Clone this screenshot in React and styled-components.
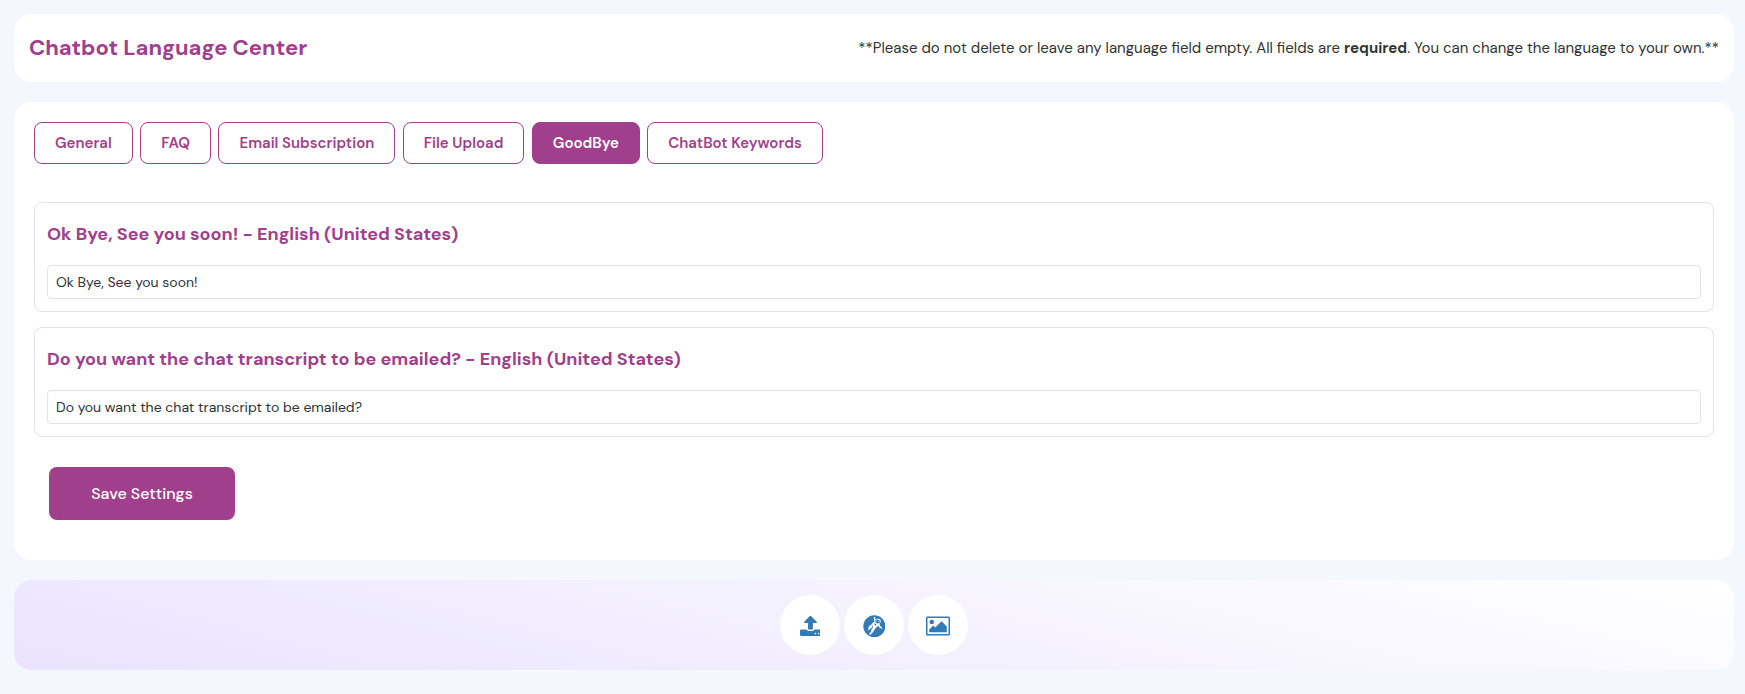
import React, { useState } from 'react';
import styled, { createGlobalStyle } from 'styled-components';
import { FaGrav } from 'react-icons/fa';

const tabs = ['General', 'FAQ', 'Email Subscription', 'File Upload', 'GoodBye', 'ChatBot Keywords'];

const fields = ['Ok Bye, See you soon!', 'Do you want the chat transcript to be emailed?'];

const UploadIcon = () => (
  <svg width="20.9" height="22.5" viewBox="0 0 1664 1792" fill="currentColor">
    <path d="M1280 1472q0-26-19-45t-45-19-45 19-19 45 19 45 45 19 45-19 19-45zm256 0q0-26-19-45t-45-19-45 19-19 45 19 45 45 19 45-19 19-45zm128-224v320q0 40-28 68t-68 28h-1472q-40 0-68-28t-28-68v-320q0-40 28-68t68-28h427q21 56 70.5 92t110.5 36h256q61 0 110.5-36t70.5-92h427q40 0 68 28t28 68zm-325-648q-17 40-59 40h-256v448q0 26-19 45t-45 19h-256q-26 0-45-19t-19-45v-448h-256q-42 0-59-40-17-39 14-69l448-448q18-19 45-19t45 19l448 448q31 30 14 69z" />
  </svg>
);

const PictureIcon = () => (
  <svg width="24" height="22" viewBox="0 0 24 22" fill="currentColor">
    <rect x="0.75" y="2.25" width="22.5" height="17.5" rx="0.6" fill="none" stroke="currentColor" strokeWidth="1.5" />
    <circle cx="5.8" cy="7" r="2.3" />
    <path d="M3.2 17.2v-2.6l4-4 2 2 6.4-6.4 5.2 5.2v5.8z" />
  </svg>
);

export default () => {
  const [active, setActive] = useState('GoodBye');

  return (
    <>
      <GlobalStyle />
      <Page>
        <Header>
          <Title>Chatbot Language Center</Title>
          <Notice>
            **Please do not delete or leave any language field empty. All fields are{' '}
            <b>required</b>. You can change the language to your own.**
          </Notice>
        </Header>

        <Panel>
          <TabList>
            {tabs.map((tab) => (
              <Tab key={tab} type="button" $active={active === tab} onClick={() => setActive(tab)}>
                {tab}
              </Tab>
            ))}
          </TabList>
          <FieldList>
            {fields.map((text) => (
              <Field key={text}>
                <FieldTitle>{text} - English (United States)</FieldTitle>
                <FieldInput type="text" defaultValue={text} />
              </Field>
            ))}
          </FieldList>
          <SaveButton type="button">Save Settings</SaveButton>
        </Panel>

        <Footer>
          <RoundButton type="button" aria-label="Upload">
            <UploadIcon />
          </RoundButton>
          <RoundButton type="button" aria-label="Grav">
            <FaGrav size={22.7} />
          </RoundButton>
          <RoundButton type="button" aria-label="Picture">
            <PictureIcon />
          </RoundButton>
        </Footer>
      </Page>
    </>
  );
};

const GlobalStyle = createGlobalStyle`
  * {
    box-sizing: border-box;
  }
  body {
    margin: 0;
    background: #f4f7fe;
    color: #333;
    font-family: 'DM Sans', Inter, sans-serif;
    font-optical-sizing: none;
  }
  button,
  input {
    font-family: inherit;
  }
`;

const Page = styled.div`
  display: flex;
  flex-direction: column;
  gap: 20px;
  min-height: 694px;
  padding: 14px 11px 24px 14px;
`;

const Header = styled.header`
  display: flex;
  align-items: center;
  justify-content: space-between;
  height: 68px;
  padding: 0 15px;
  border-radius: 18px;
  background: #fff;
`;

const Title = styled.h1`
  margin: 0 0 2px;
  color: #a03f8c;
  font-size: 22px;
  font-weight: 700;
`;

const Notice = styled.p`
  margin: 0;
  font-size: 15px;
  white-space: nowrap;

  b {
    font-weight: 700;
  }
`;

const Panel = styled.main`
  height: 458px;
  padding: 20px;
  border-radius: 18px;
  background: #fff;
`;

const TabList = styled.div`
  display: flex;
  gap: 7.5px;
`;

const Tab = styled.button`
  height: 42px;
  padding: 0 20px;
  border: 1px solid #a03f8c;
  border-radius: 8px;
  background: ${(props) => (props.$active ? '#a03f8c' : '#fff')};
  color: ${(props) => (props.$active ? '#fff' : '#a03f8c')};
  font-size: 15px;
  font-weight: 600;
  white-space: nowrap;
  cursor: pointer;
`;

const FieldList = styled.div`
  display: flex;
  flex-direction: column;
  gap: 15px;
  margin-top: 38px;
`;

const Field = styled.div`
  height: 110px;
  padding: 19px 12px 12px;
  border: 1px solid #e2e3ec;
  border-radius: 8px;
`;

const FieldTitle = styled.h2`
  margin: 0 0 19px;
  color: #a03f8c;
  font-size: 18px;
  font-weight: 700;
  line-height: 24px;
`;

const FieldInput = styled.input`
  display: block;
  width: 100%;
  height: 34px;
  padding: 0 8px;
  border: 1px solid #e2e3ec;
  border-radius: 4px;
  outline: 0;
  background: #fff;
  color: #2c3338;
  font-size: 14px;
`;

const SaveButton = styled.button`
  display: block;
  width: 186px;
  height: 53px;
  margin: 30px 0 0 15px;
  border: 0;
  border-radius: 8px;
  background: #a03f8c;
  color: #fff;
  font-size: 16px;
  font-weight: 500;
  cursor: pointer;
`;

const Footer = styled.footer`
  display: flex;
  align-items: center;
  justify-content: center;
  gap: 4px;
  height: 90px;
  border-radius: 18px;
  background: linear-gradient(14deg, #e9e3fe, #fff);
`;

const RoundButton = styled.button`
  display: flex;
  align-items: center;
  justify-content: center;
  width: 60px;
  height: 60px;
  padding: 2px 0 0;
  border: 0;
  border-radius: 50%;
  background: #fff;
  color: #337ab7;
  cursor: pointer;
`;
